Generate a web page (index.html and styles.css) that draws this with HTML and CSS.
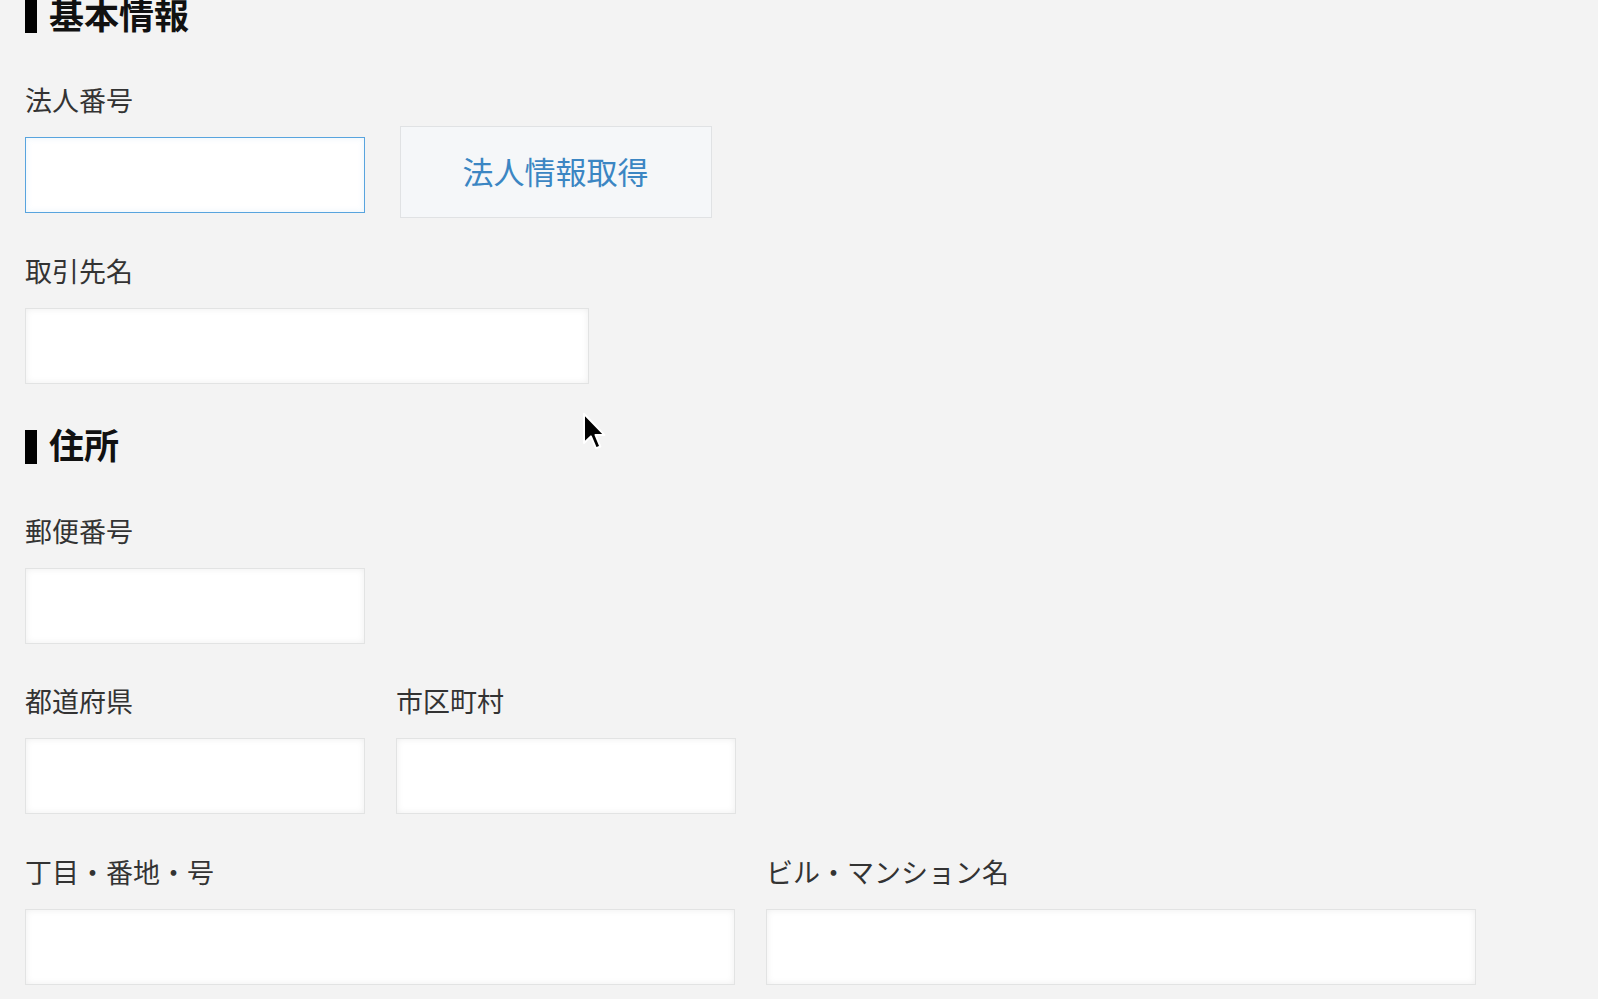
FILE: index.html
```html
<!DOCTYPE html>
<html lang="ja">
<head>
<meta charset="utf-8">
<title>取引先登録</title>
<link rel="stylesheet" href="styles.css">
</head>
<body>
<main class="page">
  <h2 class="section-title"><span class="bar"></span><span class="title-text">基本情報</span></h2>

  <div class="field field-inline">
    <div class="field-main">
      <label class="label">法人番号</label>
      <input class="input input-short input-focus" type="text">
    </div>
    <button class="fetch-btn" type="button">法人情報取得</button>
  </div>

  <div class="field">
    <label class="label">取引先名</label>
    <input class="input input-name" type="text">
  </div>

  <h2 class="section-title"><span class="bar"></span><span class="title-text">住所</span></h2>

  <div class="field">
    <label class="label">郵便番号</label>
    <input class="input input-short" type="text">
  </div>

  <div class="row">
    <div class="cell">
      <label class="label">都道府県</label>
      <input class="input" type="text">
    </div>
    <div class="cell">
      <label class="label">市区町村</label>
      <input class="input" type="text">
    </div>
  </div>

  <div class="row row-wide">
    <div class="cell">
      <label class="label">丁目・番地・号</label>
      <input class="input" type="text">
    </div>
    <div class="cell">
      <label class="label">ビル・マンション名</label>
      <input class="input" type="text">
    </div>
  </div>

  <svg class="cursor" viewBox="0 0 13 22" width="24" height="40" aria-hidden="true">
    <path d="M1 1 L1 17 L4.8 13.4 L7.6 20 L10 19 L7.3 12.6 L12.2 12.6 Z" fill="#000" stroke="#fff" stroke-width="1.1" stroke-linejoin="round"/>
  </svg>
</main>
</body>
</html>
```

FILE: styles.css
```css
* { box-sizing: border-box; }

html, body {
  margin: 0;
  padding: 0;
  background: #f3f3f3;
}

body {
  font-family: "Noto Sans CJK JP", "Noto Sans", sans-serif;
  color: #333;
  overflow: hidden;
}

.page {
  display: flow-root;
  position: relative;
  padding-left: 25px;
  min-height: 999px;
}

.section-title {
  display: flex;
  align-items: center;
  gap: 12px;
  height: 34px;
  margin: 46px 0 47px;
  font-size: 35px;
  font-weight: 700;
  line-height: 34px;
  color: #111;
}

.section-title:first-child {
  margin-top: -1px;
}

.title-text {
  margin-bottom: 5px;
}

.bar {
  display: block;
  width: 12px;
  height: 34px;
  background: #000;
}

.label {
  display: block;
  font-size: 27px;
  line-height: 40px;
  margin-bottom: 17px;
  color: #333;
  white-space: nowrap;
}

.field {
  margin-bottom: 37.5px;
}

.field-inline {
  display: flex;
  align-items: flex-end;
}

.input {
  display: block;
  width: 100%;
  height: 76px;
  margin: 0;
  padding: 0 12px;
  background: #fff;
  border: 1px solid #e2e3e3;
  border-radius: 0;
  box-shadow: inset 0 0 7px rgba(0, 0, 0, 0.07);
  font: inherit;
  outline: none;
}

.input-short {
  width: 340px;
}

.input-name {
  width: 564px;
}

.input-focus {
  border-color: #58a4de;
  box-shadow: inset 0 0 6px rgba(88, 164, 222, 0.12);
}

.fetch-btn {
  width: 312px;
  height: 92px;
  margin: 0 0 -5px 34.5px;
  padding: 0 0 4px;
  background: #f5f7f9;
  border: 1px solid #e0e2e4;
  border-radius: 0;
  font-family: "Noto Sans CJK JP", "Noto Sans", sans-serif;
  font-size: 31px;
  color: #3b86c3;
  cursor: pointer;
}

.row {
  display: grid;
  grid-template-columns: 340px 340px;
  column-gap: 31px;
  margin-bottom: 37.5px;
}

.row-wide {
  grid-template-columns: 710px 710px;
}

.cursor {
  position: absolute;
  left: 582px;
  top: 412px;
}
```
